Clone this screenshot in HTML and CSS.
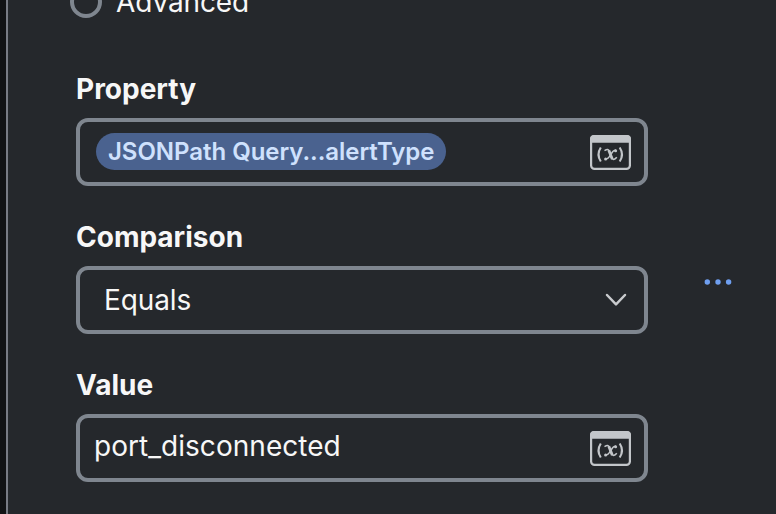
FILE: index.html
```html
<!DOCTYPE html>
<html lang="en">
<head>
<meta charset="utf-8">
<title>Condition</title>
<link rel="stylesheet" href="styles.css">
</head>
<body>
<main class="panel">
  <svg class="defs" width="0" height="0">
    <symbol id="variable" viewBox="0 0 41 35">
      <g fill="none" stroke="#c3c6ca">
        <rect x="1.100" y="1.100" width="38.800" height="32.800" rx="3.500" stroke-width="2.200"/>
        <path d="M10.800 12.500q-4.600 7 0 14M29.700 12.500q4.600 7 0 14" stroke-width="2.100"/>
        <path d="M14.500 15.700C17.500 13.800 18.500 14.300 19.300 16.500L21.700 22.800C22.500 25 24.500 25 26.800 22.300" stroke-width="1.500"/>
        <path d="M18.800 15.300L22.300 24.300" stroke-width="2.800"/>
        <path d="M26 15.300C23 14.800 22 17.500 20.700 19.700S18 24.500 15.300 24.200" stroke-width="1.500"/>
      </g>
      <g fill="#c3c6ca">
        <path d="M0 7.700V4a4 4 0 0 1 4-4h33a4 4 0 0 1 4 4v3.700z"/>
        <circle cx="25.600" cy="15.700" r="1.500"/>
        <circle cx="15.600" cy="23.900" r="1.500"/>
      </g>
    </symbol>
  </svg>
  <div class="form">
    <label class="radio"><span class="radio-dot"></span><span class="radio-text">Advanced</span></label>
    <section class="group">
      <div class="label">Property</div>
      <div class="field">
        <span class="pill">JSONPath Query...alertType</span>
        <svg class="var" width="41" height="35"><use href="#variable"/></svg>
      </div>
    </section>
    <section class="group">
      <div class="label">Comparison</div>
      <div class="field select">
        <span class="equals">Equals</span>
        <svg class="chevron" width="22" height="14" viewBox="0 0 22 14"><path d="M2 2l9 9.300L20 2" fill="none" stroke="#c9cbce" stroke-width="2.500" stroke-linecap="round" stroke-linejoin="round"/></svg>
      </div>
    </section>
    <section class="group">
      <div class="label">Value</div>
      <div class="field">
        <span class="port">port_disconnected</span>
        <svg class="var" width="41" height="35"><use href="#variable"/></svg>
      </div>
    </section>
  </div>
  <svg class="more" width="28" height="8" viewBox="0 0 28 8" fill="#6f9ff0"><circle cx="3.300" cy="4" r="2.700"/><circle cx="14" cy="4" r="2.700"/><circle cx="24.600" cy="4" r="2.700"/></svg>
</main>
</body>
</html>
```
FILE: styles.css
```css
* { box-sizing: border-box; }
body {
  margin: 0;
  height: 514px;
  overflow: hidden;
  background: #111214;
  color: #f7f7f7;
  font-family: Inter, sans-serif;
  font-size: 28px;
}
.panel {
  display: flex;
  align-items: flex-start;
  height: 514px;
  margin-left: 6px;
  padding-left: 68px;
  border-left: 2px solid #787b84;
  background: #25282c;
}
.defs { position: absolute; }
.form { width: 572px; }
.radio {
  display: flex;
  height: 38px;
  margin: -20px 0 52px -6px;
  gap: 14px;
}
.radio-dot {
  width: 32px;
  height: 32px;
  margin-top: 6px;
  border: 4px solid #7f868f;
  border-radius: 50%;
}
.radio-text { line-height: 34px; margin-top: 5px; letter-spacing: -0.1px; }
.group { margin-bottom: 32px; }
.label { height: 38px; line-height: 38px; margin-bottom: 10px; font-weight: 700; }
.field {
  display: flex;
  align-items: center;
  justify-content: space-between;
  height: 68px;
  padding: 0 13px 0 16px;
  border: 4px solid #7f868f;
  border-radius: 12px;
}
.pill {
  display: flex;
  align-items: center;
  width: 350px;
  height: 37px;
  margin-bottom: 1px;
  padding-left: 12px;
  border-radius: 19px;
  background: #4a628f;
  color: #cfe1fd;
  font-size: 24px;
  font-weight: 600;
  letter-spacing: -0.04px;
  white-space: nowrap;
}
.var { display: block; margin-top: 1px; }
.select { padding: 0 17px 0 24px; }
.equals { letter-spacing: -0.1px; }
.port { margin: -4px 0 0 -2px; letter-spacing: 0.04px; }
.more { margin: 278px 0 0 56px; }
```
